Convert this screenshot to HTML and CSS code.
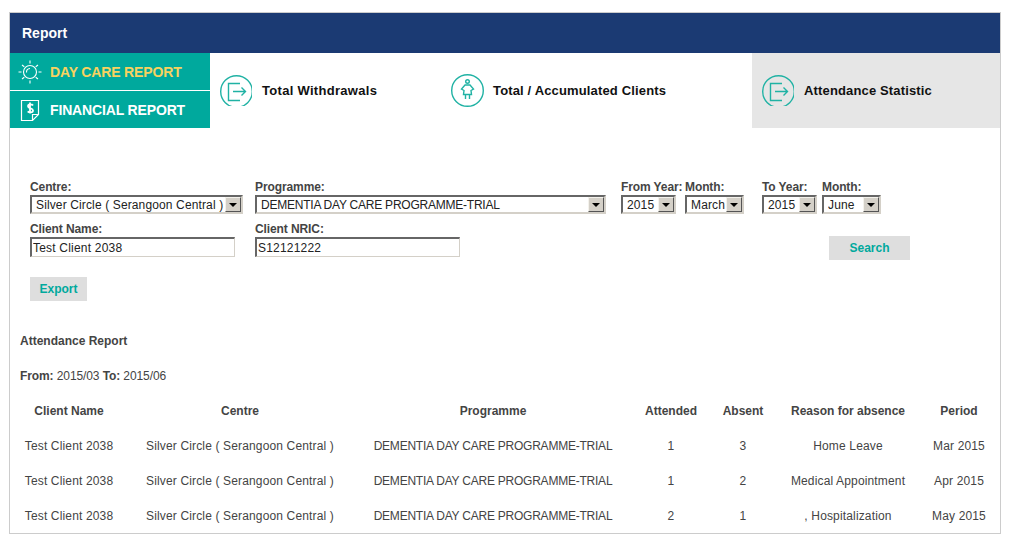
FILE: index.html
```html
<!DOCTYPE html>
<html lang="en">

<head>
    <meta charset="UTF-8">
    <meta name="viewport" content="width=device-width, initial-scale=1.0">
    <title>Report</title>
    <link rel="stylesheet" href="styles.css">
</head>

<body>
    <div class="panel">
        <header class="panel-head">Report</header>

        <nav class="top-nav">
            <div class="side-menu">
                <a class="side-item side-active" href="#daycare">
                    <svg class="side-icon" width="30" height="30" viewBox="0 0 30 30" fill="none" stroke="#fff" stroke-width="1.1">
                        <circle cx="15" cy="15" r="6.500"/>
                        <path d="M11.500 15.500a3.800 3.800 0 0 1 3.500-4"/>
                        <path d="M15 3.500v3M15 23.500v3M3.500 15h3M23.500 15h3M7 8l2.300 1.700M23 8l-2.300 1.700M7 22l2.300-1.700M23 22l-2.300-1.700"/>
                    </svg>
                    DAY CARE REPORT
                </a>
                <a class="side-item" href="#financial">
                    <svg class="side-icon" width="30" height="30" viewBox="0 0 30 30" fill="none" stroke="#fff" stroke-width="1.200">
                        <path d="M6.500 5.500h17v14l-6 6h-11z"/>
                        <path d="M23.500 19.500h-6v6"/>
                        <path d="M18 10.500c-1-1.500-5-1.500-5 .8 0 2.700 5 1.500 5 4.200 0 2.300-4 2.300-5.300.8M15 7.500v11" stroke-width="1.800"/>
                    </svg>
                    FINANCIAL REPORT
                </a>
            </div>

            <a class="tab tab-one" href="#withdrawals">
                <span class="tab-icon tab-icon-cut">
                    <svg width="33" height="33" viewBox="0 0 33 33" fill="none" stroke="#20b2a4" stroke-width="1.400">
                        <circle cx="16.500" cy="16.500" r="15.800"/>
                        <path d="M20 8.500H8.500v17H20M13 16.500h12.500M21.500 12.500l4 4-4 4"/>
                    </svg>
                </span>
                Total Withdrawals
            </a>
            <a class="tab tab-two" href="#clients">
                <span class="tab-icon">
                    <svg width="33" height="33" viewBox="0 0 33 33" fill="none" stroke="#20b2a4" stroke-width="1.400">
                        <circle cx="16.500" cy="16.500" r="15.800"/>
                        <circle cx="16.500" cy="7.500" r="1.800"/>
                        <path d="M14 11h5l3.500 4-2.500 1.500.5 4h-8l.5-4-2.500-1.500zM14.500 20.500v4.500M18.500 20.500v4.500"/>
                    </svg>
                </span>
                Total / Accumulated Clients
            </a>
            <a class="tab tab-three" href="#attendance">
                <span class="tab-icon tab-icon-cut">
                    <svg width="33" height="33" viewBox="0 0 33 33" fill="none" stroke="#20b2a4" stroke-width="1.400">
                        <circle cx="16.500" cy="16.500" r="15.800"/>
                        <path d="M20 8.500H8.500v17H20M13 16.500h12.500M21.500 12.500l4 4-4 4"/>
                    </svg>
                </span>
                Attendance Statistic
            </a>
        </nav>

        <main class="content">
            <form class="filters">
                <div class="form-row">
                    <div class="field field-centre">
                        <label>Centre:</label>
                        <div class="select-box">
                            <select><option>Silver Circle ( Serangoon Central )</option></select>
                            <span class="select-btn"></span>
                        </div>
                    </div>
                    <div class="field field-programme">
                        <label>Programme:</label>
                        <div class="select-box">
                            <select><option>DEMENTIA DAY CARE PROGRAMME-TRIAL</option></select>
                            <span class="select-btn"></span>
                        </div>
                    </div>
                    <div class="field field-from">
                        <label>From Year:</label>
                        <div class="select-box box-year">
                            <select><option>2015</option></select>
                            <span class="select-btn"></span>
                        </div>
                    </div>
                    <div class="field field-from-month">
                        <label>Month:</label>
                        <div class="select-box box-month">
                            <select><option>March</option></select>
                            <span class="select-btn"></span>
                        </div>
                    </div>
                    <div class="field field-to">
                        <label>To Year:</label>
                        <div class="select-box box-year">
                            <select><option>2015</option></select>
                            <span class="select-btn"></span>
                        </div>
                    </div>
                    <div class="field">
                        <label>Month:</label>
                        <div class="select-box box-month">
                            <select><option>June</option></select>
                            <span class="select-btn"></span>
                        </div>
                    </div>
                </div>

                <div class="form-row form-row-two">
                    <div class="field field-name">
                        <label>Client Name:</label>
                        <input type="text" value="Test Client 2038">
                    </div>
                    <div class="field field-nric">
                        <label>Client NRIC:</label>
                        <input type="text" value="S12121222">
                    </div>
                    <button class="btn btn-search" type="button">Search</button>
                </div>

                <button class="btn btn-export" type="button">Export</button>
            </form>

            <h3 class="report-title">Attendance Report</h3>
            <p class="report-range"><b>From:</b> 2015/03 <b>To:</b> 2015/06</p>

            <table class="report-table">
                <colgroup>
                    <col class="col-name">
                    <col class="col-centre">
                    <col class="col-programme">
                    <col class="col-attended">
                    <col class="col-absent">
                    <col class="col-reason">
                    <col class="col-period">
                </colgroup>
                <thead>
                    <tr>
                        <th>Client Name</th>
                        <th>Centre</th>
                        <th>Programme</th>
                        <th>Attended</th>
                        <th>Absent</th>
                        <th>Reason for absence</th>
                        <th>Period</th>
                    </tr>
                </thead>
                <tbody>
                    <tr>
                        <td>Test Client 2038</td>
                        <td>Silver Circle ( Serangoon Central )</td>
                        <td class="caps">DEMENTIA DAY CARE PROGRAMME-TRIAL</td>
                        <td>1</td>
                        <td>3</td>
                        <td>Home Leave</td>
                        <td>Mar 2015</td>
                    </tr>
                    <tr>
                        <td>Test Client 2038</td>
                        <td>Silver Circle ( Serangoon Central )</td>
                        <td class="caps">DEMENTIA DAY CARE PROGRAMME-TRIAL</td>
                        <td>1</td>
                        <td>2</td>
                        <td>Medical Appointment</td>
                        <td>Apr 2015</td>
                    </tr>
                    <tr>
                        <td>Test Client 2038</td>
                        <td>Silver Circle ( Serangoon Central )</td>
                        <td class="caps">DEMENTIA DAY CARE PROGRAMME-TRIAL</td>
                        <td>2</td>
                        <td>1</td>
                        <td>, Hospitalization</td>
                        <td>May 2015</td>
                    </tr>
                </tbody>
            </table>
        </main>
    </div>
</body>

</html>
```

FILE: styles.css
```css
* {
    box-sizing: border-box;
}

body {
    font-family: "Liberation Sans", Arial, sans-serif;
    font-size: 12px;
    margin: 0;
    background: #fff;
    color: #444;
    overflow: hidden;
}

.panel {
    width: 992px;
    height: 522px;
    margin: 12px 0 0 9px;
    border: 1px solid #ccc;
    overflow: hidden;
}

.panel-head {
    height: 40px;
    line-height: 40px;
    padding-left: 12px;
    background: #1b3a73;
    color: #fff;
    font-size: 14px;
    font-weight: bold;
}

/* top navigation */
.top-nav {
    display: flex;
    height: 75px;
}

.side-menu {
    width: 200px;
    flex: none;
    display: flex;
    flex-direction: column;
    gap: 1px;
}

.side-item {
    display: flex;
    align-items: center;
    height: 37px;
    gap: 5px;
    padding-left: 5px;
    background: #00a99d;
    color: #fff;
    font-size: 14px;
    font-weight: bold;
    letter-spacing: -0.15px;
    text-decoration: none;
}

.side-active {
    color: #f8d25f;
}

.side-icon {
    flex: none;
    width: 30px;
    height: 30px;
}

.tab {
    display: flex;
    align-items: center;
    gap: 9px;
    padding-left: 10px;
    color: #111;
    font-size: 13px;
    font-weight: bold;
    letter-spacing: 0.15px;
    text-decoration: none;
}

.tab-one {
    width: 231px;
    letter-spacing: 0.3px;
}

.tab-two {
    width: 311px;
}

.tab-three {
    width: 248px;
    background: #e6e6e6;
}

.tab-icon {
    display: block;
    flex: none;
    width: 33px;
    height: 33px;
    overflow: hidden;
}

.tab-icon svg {
    display: block;
}

.tab-icon-cut {
    height: 31px;
    width: 32px;
    margin-right: 1px;
}

/* filter form */
.content {
    padding: 52px 10px 0;
}

.filters {
    padding-left: 10px;
}

.form-row {
    display: flex;
    align-items: flex-start;
}

.form-row-two {
    margin-top: 8px;
}

.field label {
    display: block;
    height: 15px;
    line-height: 15px;
    font-weight: bold;
    letter-spacing: -0.1px;
    white-space: nowrap;
}

.field-centre {
    width: 225px;
}

.field-programme {
    width: 366px;
}

.field-from {
    width: 64px;
}

.field-from-month {
    width: 77px;
}

.field-to {
    width: 60px;
}

.select-box {
    position: relative;
    height: 19px;
    border: 2px solid;
    border-color: #666 #d4d0c8 #d4d0c8 #666;
    background: #fff;
}

.field-centre .select-box {
    width: 213px;
}

.field-programme .select-box {
    width: 351px;
}

.box-year {
    width: 55px;
}

.box-month {
    width: 59px;
}

.select-box select {
    display: block;
    appearance: none;
    width: 100%;
    height: 15px;
    padding: 1px 0 0 4px;
    border: 0;
    background: transparent;
    color: #222;
    font-family: inherit;
    font-size: 12px;
    line-height: 14px;
    letter-spacing: 0.13px;
}

.field-programme select {
    letter-spacing: -0.23px;
}

.select-btn {
    position: absolute;
    top: 0;
    right: 0;
    width: 16px;
    height: 15px;
    border: 1px solid;
    border-color: #f4f2ec #555 #555 #f4f2ec;
    background: #d4d0c8;
}

.select-btn::after {
    content: "";
    position: absolute;
    top: 5px;
    left: 3px;
    border: 4px solid transparent;
    border-top-color: #000;
    border-bottom: 0;
}

.field input {
    display: block;
    height: 20px;
    width: 205px;
    padding: 0 1px;
    border: 1px solid;
    border-width: 2px 1px 1px 2px;
    border-color: #666 #d4d0c8 #d4d0c8 #666;
    color: #222;
    font-family: inherit;
    font-size: 12px;
    letter-spacing: 0.2px;
}

.field-name {
    width: 225px;
}

.field-nric {
    width: 574px;
}

.btn {
    display: block;
    height: 24px;
    border: 0;
    padding: 0;
    background: #dedede;
    color: #00a99d;
    font-family: inherit;
    font-size: 12px;
    font-weight: bold;
}

.btn-search {
    width: 81px;
    margin-top: 14px;
}

.btn-export {
    width: 57px;
    margin-top: 17px;
}

/* report */
.report-title {
    margin: 33px 0 0;
    font-size: 12px;
    line-height: 15px;
}

.report-range {
    margin: 20px 0 0;
    line-height: 15px;
    letter-spacing: -0.1px;
}

.report-table {
    width: 970px;
    margin-top: 9px;
    border-collapse: collapse;
    table-layout: fixed;
}

.report-table th,
.report-table td {
    height: 35px;
    padding: 0;
    text-align: center;
    white-space: nowrap;
}

.report-table td {
    letter-spacing: 0.15px;
}

.report-table .caps {
    letter-spacing: -0.23px;
}

.col-name {
    width: 98px;
}

.col-centre {
    width: 244px;
}

.col-programme {
    width: 262px;
}

.col-attended {
    width: 94px;
}

.col-absent {
    width: 50px;
}

.col-reason {
    width: 160px;
}

.col-period {
    width: 62px;
}
```
